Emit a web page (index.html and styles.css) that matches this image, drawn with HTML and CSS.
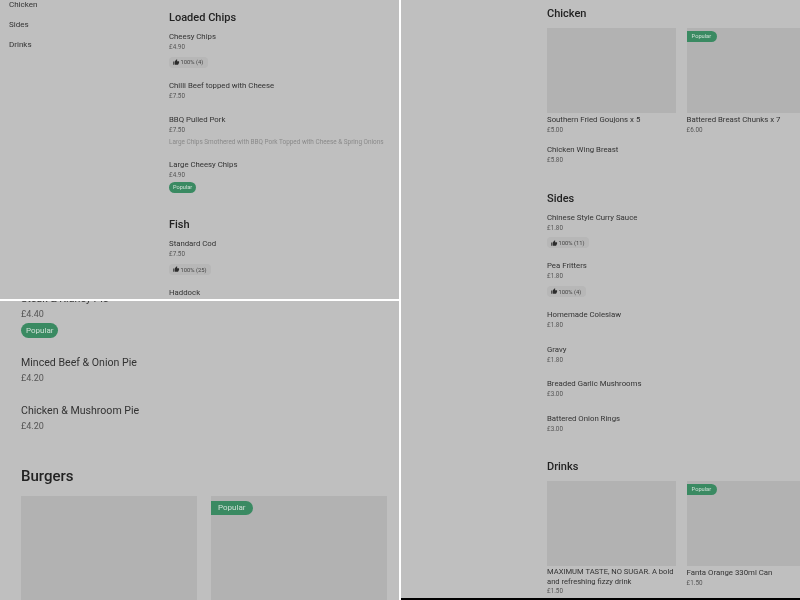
FILE: index.html
```html
<!DOCTYPE html>
<html>
<head>
    <meta charset="UTF-8">
    <title>Menu</title>
    <link rel="stylesheet" href="styles.css">
</head>
<body>
    <svg class="defs" width="0" height="0">
        <symbol id="thumb" viewBox="0 0 24 24">
            <path d="M1 21h4V9H1v12zm22-11c0-1.1-.9-2-2-2h-6.31l.95-4.57.03-.32c0-.41-.17-.79-.44-1.06L14.17 1 7.59 7.59C7.22 7.95 7 8.45 7 9v10c0 1.1.9 2 2 2h9c.83 0 1.54-.5 1.84-1.22l3.02-7.05c.09-.23.14-.47.14-.73v-2z"/>
        </symbol>
    </svg>
    <div class="screens">
        <div class="left-col">
            <div class="panel panel-top">
                <ul class="side-nav">
                    <li>Chicken</li>
                    <li>Sides</li>
                    <li>Drinks</li>
                </ul>
                <div class="menu">
                    <h2 class="section-title">Loaded Chips</h2>
                    <div class="item">
                        <div class="name">Cheesy Chips</div>
                        <div class="price">£4.90</div>
                        <span class="rating"><svg class="thumb"><use href="#thumb"/></svg>100% (4)</span>
                    </div>
                    <div class="item">
                        <div class="name">Chilli Beef topped with Cheese</div>
                        <div class="price">£7.50</div>
                    </div>
                    <div class="item">
                        <div class="name">BBQ Pulled Pork</div>
                        <div class="price">£7.50</div>
                        <div class="desc">Large Chips Smothered with BBQ Pork Topped with Cheese &amp; Spring Onions</div>
                    </div>
                    <div class="item">
                        <div class="name">Large Cheesy Chips</div>
                        <div class="price">£4.90</div>
                        <span class="pill">Popular</span>
                    </div>
                    <h2 class="section-title section-next">Fish</h2>
                    <div class="item">
                        <div class="name">Standard Cod</div>
                        <div class="price">£7.50</div>
                        <span class="rating"><svg class="thumb"><use href="#thumb"/></svg>100% (25)</span>
                    </div>
                    <div class="item">
                        <div class="name">Haddock</div>
                    </div>
                </div>
            </div>
            <div class="panel panel-bottom">
                <div class="menu-large">
                    <div class="item">
                        <div class="name">Steak &amp; Kidney Pie</div>
                        <div class="price">£4.40</div>
                        <span class="pill">Popular</span>
                    </div>
                    <div class="item">
                        <div class="name">Minced Beef &amp; Onion Pie</div>
                        <div class="price">£4.20</div>
                    </div>
                    <div class="item">
                        <div class="name">Chicken &amp; Mushroom Pie</div>
                        <div class="price">£4.20</div>
                    </div>
                    <h2 class="section-title section-next">Burgers</h2>
                    <div class="cards">
                        <div class="card"><div class="thumbnail"></div></div>
                        <div class="card"><div class="thumbnail"><span class="tag">Popular</span></div></div>
                    </div>
                </div>
            </div>
        </div>
        <div class="panel panel-right">
            <div class="menu">
                <h2 class="section-title">Chicken</h2>
                <div class="cards">
                    <div class="card">
                        <div class="thumbnail"></div>
                        <div class="name">Southern Fried Goujons x 5</div>
                        <div class="price">£5.00</div>
                    </div>
                    <div class="card">
                        <div class="thumbnail"><span class="tag">Popular</span></div>
                        <div class="name">Battered Breast Chunks x 7</div>
                        <div class="price">£6.00</div>
                    </div>
                </div>
                <div class="item">
                    <div class="name">Chicken Wing Breast</div>
                    <div class="price">£5.80</div>
                </div>
                <h2 class="section-title section-next">Sides</h2>
                <div class="item">
                    <div class="name">Chinese Style Curry Sauce</div>
                    <div class="price">£1.80</div>
                    <span class="rating"><svg class="thumb"><use href="#thumb"/></svg>100% (11)</span>
                </div>
                <div class="item">
                    <div class="name">Pea Fritters</div>
                    <div class="price">£1.80</div>
                    <span class="rating"><svg class="thumb"><use href="#thumb"/></svg>100% (4)</span>
                </div>
                <div class="item">
                    <div class="name">Homemade Coleslaw</div>
                    <div class="price">£1.80</div>
                </div>
                <div class="item">
                    <div class="name">Gravy</div>
                    <div class="price">£1.80</div>
                </div>
                <div class="item">
                    <div class="name">Breaded Garlic Mushrooms</div>
                    <div class="price">£3.00</div>
                </div>
                <div class="item">
                    <div class="name">Battered Onion Rings</div>
                    <div class="price">£3.00</div>
                </div>
                <h2 class="section-title section-next">Drinks</h2>
                <div class="cards">
                    <div class="card">
                        <div class="thumbnail"></div>
                        <div class="name wrap">MAXIMUM TASTE, NO SUGAR. A bold and refreshing fizzy drink</div>
                        <div class="price">£1.50</div>
                    </div>
                    <div class="card">
                        <div class="thumbnail"><span class="tag">Popular</span></div>
                        <div class="name">Fanta Orange 330ml Can</div>
                        <div class="price">£1.50</div>
                    </div>
                </div>
            </div>
        </div>
    </div>
</body>
</html>
```

FILE: styles.css
```css
body {
    margin: 0;
    background: #000;
    font-family: "Roboto", "Liberation Sans", sans-serif;
    color: #333;
}

.defs {
    position: absolute;
}

.screens {
    display: flex;
    width: 800px;
    height: 600px;
    overflow: hidden;
}

.left-col {
    width: 399px;
    height: 600px;
    display: flex;
    flex-direction: column;
    gap: 2px;
    background: #fff;
    border-right: 2px solid #fff;
}

/* the shots are soft, they were scaled down */
.panel {
    background: #bfbfbf;
    overflow: hidden;
    filter: blur(0.3px);
}

.panel-top {
    height: 299px;
    display: flex;
}

.panel-bottom {
    height: 299px;
}

.panel-right {
    width: 399px;
    height: 598px;
}

.side-nav {
    list-style: none;
    margin: 0;
    padding: 0 0 0 9px;
    width: 160px;
    flex: none;
    font-size: 8px;
}

.side-nav li {
    height: 20px;
    line-height: 10px;
}

.panel-right .menu {
    padding: 7px 0 0 146px;
}

.panel-top .menu {
    padding-top: 11px;
    flex: 1;
    min-width: 0;
}

.section-title {
    margin: 0 0 6px;
    font-size: 11px;
    line-height: 14px;
    font-weight: 500;
    color: #222;
}

.section-next {
    margin-top: 25px;
}

.item {
    margin-bottom: 12px;
}

.name {
    font-size: 7.8px;
    line-height: 11px;
}

.name.wrap {
    font-size: 7.6px;
    line-height: 9.5px;
}

.price {
    font-size: 6.3px;
    line-height: 11.5px;
    color: #555;
}

.desc {
    font-size: 6.4px;
    line-height: 10.5px;
    white-space: nowrap;
    color: #8a8a8a;
}

.rating {
    display: flex;
    width: fit-content;
    align-items: center;
    gap: 1px;
    height: 11px;
    margin-top: 3.25px;
    padding: 0 5px 0 4px;
    border-radius: 4px;
    background: #b7b7b7;
    font-size: 5.8px;
    color: #444;
}

.thumb {
    width: 6.5px;
    height: 6.5px;
    fill: #2c2c2c;
}

.pill {
    display: block;
    width: fit-content;
    margin-top: 0.5px;
    padding: 0 4px;
    height: 11px;
    line-height: 11px;
    border-radius: 6px;
    background: #3a8a62;
    font-size: 5.6px;
    color: #cfe0d6;
}

.cards {
    display: flex;
    gap: 10.6px;
    margin-top: 7px;
}

.card {
    width: 129px;
    flex: none;
    margin-bottom: 7.5px;
}

.thumbnail {
    position: relative;
    height: 85px;
    background: #b2b2b2;
    margin-bottom: 1px;
}

.tag {
    position: absolute;
    top: 3px;
    left: 0;
    height: 11px;
    line-height: 11px;
    padding: 0 6px 0 5px;
    border-radius: 0 6px 6px 0;
    background: #3a8a62;
    font-size: 5.7px;
    color: #cfe0d6;
}

/* bigger scale on the bottom left shot */
.menu-large {
    margin-top: -10px;
    padding-left: 21px;
}

.menu-large .item {
    margin-bottom: 15.75px;
}

.menu-large .name {
    font-size: 10.6px;
    line-height: 16px;
}

.menu-large .price {
    font-size: 9px;
    line-height: 15.5px;
}

.menu-large .pill {
    height: 15px;
    line-height: 15px;
    padding: 0 5px;
    margin: 0.5px 0 17.25px;
    border-radius: 8px;
    font-size: 8px;
}

.menu-large .section-title {
    margin: 31.75px 0 0;
    font-size: 15px;
    line-height: 20px;
}

.menu-large .cards {
    gap: 14px;
    padding-top: 10px;
    margin-top: 0;
}

.menu-large .card {
    width: 176px;
}

.menu-large .thumbnail {
    height: 110px;
}

.menu-large .tag {
    top: 5px;
    height: 14px;
    line-height: 14px;
    padding: 0 7.5px 0 7px;
    border-radius: 0 8px 8px 0;
    font-size: 8px;
}
```
